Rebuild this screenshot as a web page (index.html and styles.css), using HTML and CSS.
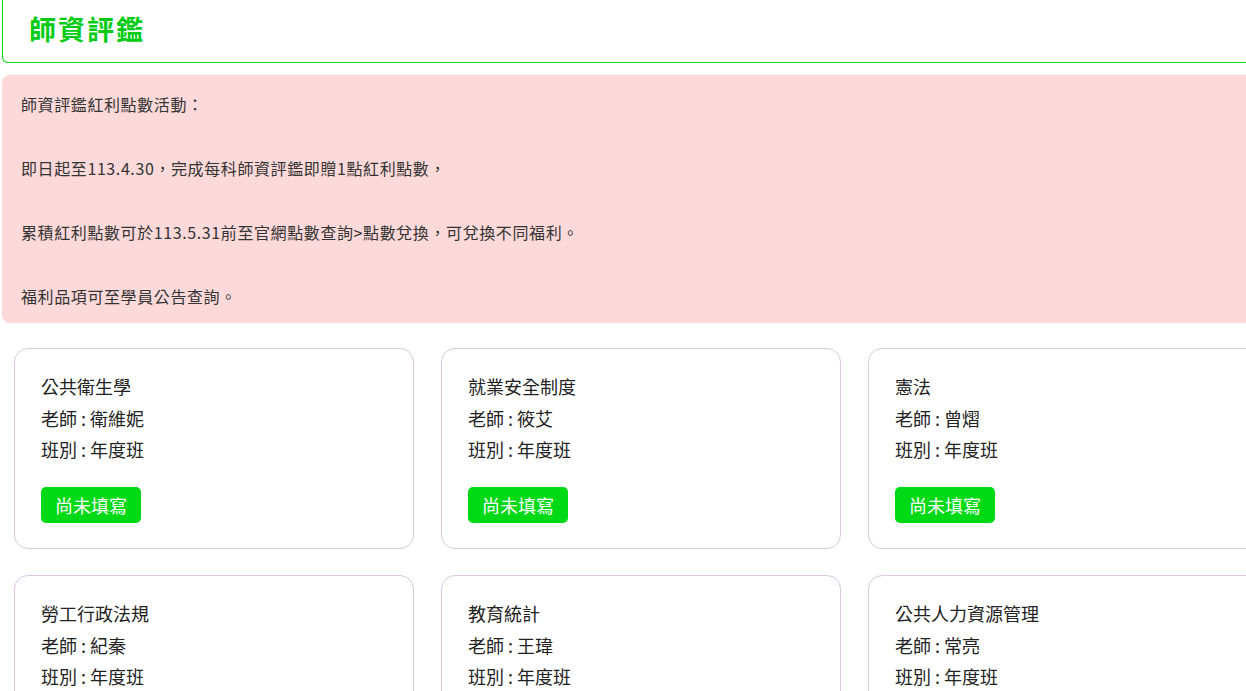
FILE: index.html
```html
<!DOCTYPE html>
<html lang="zh-Hant">

<head>
    <meta charset="UTF-8" />
    <meta name="viewport" content="width=device-width, initial-scale=1.0" />
    <title>師資評鑑</title>
    <link rel="stylesheet" href="styles.css">
</head>

<body>
    <div class="page">
        <header class="page-header">
            <h1>師資評鑑</h1>
        </header>

        <div class="notice">
            師資評鑑紅利點數活動：<br><br>
            即日起至113.4.30，完成每科師資評鑑即贈1點紅利點數，<br><br>
            累積紅利點數可於113.5.31前至官網點數查詢&gt;點數兌換，可兌換不同福利。<br><br>
            福利品項可至學員公告查詢。
        </div>

        <div class="course-grid">
            <div class="course-card">
                <p>公共衛生學</p>
                <p>老師 : 衛維妮</p>
                <p>班別 : 年度班</p>
                <button class="btn-fill">尚未填寫</button>
            </div>
            <div class="course-card">
                <p>就業安全制度</p>
                <p>老師 : 筱艾</p>
                <p>班別 : 年度班</p>
                <button class="btn-fill">尚未填寫</button>
            </div>
            <div class="course-card">
                <p>憲法</p>
                <p>老師 : 曾熠</p>
                <p>班別 : 年度班</p>
                <button class="btn-fill">尚未填寫</button>
            </div>
            <div class="course-card">
                <p>勞工行政法規</p>
                <p>老師 : 紀秦</p>
                <p>班別 : 年度班</p>
                <button class="btn-fill">尚未填寫</button>
            </div>
            <div class="course-card">
                <p>教育統計</p>
                <p>老師 : 王瑋</p>
                <p>班別 : 年度班</p>
                <button class="btn-fill">尚未填寫</button>
            </div>
            <div class="course-card">
                <p>公共人力資源管理</p>
                <p>老師 : 常亮</p>
                <p>班別 : 年度班</p>
                <button class="btn-fill">尚未填寫</button>
            </div>
        </div>
    </div>
</body>

</html>
```

FILE: styles.css
```css
* {
    box-sizing: border-box;
}

html,
body {
    overflow: hidden;
}

body {
    margin: 0;
    background: #fff;
    color: #222;
    font-family: "Noto Sans CJK TC", "Noto Sans", sans-serif;
}

.page {
    width: 1300px;
    padding-left: 2px;
}

.page-header {
    height: 63px;
    border: 1px solid #00d916;
    border-top: none;
    border-radius: 0 0 0 6px;
    padding-left: 26px;
    display: flex;
    align-items: center;
}

.page-header h1 {
    margin: 0 0 6px;
    font-size: 27px;
    font-weight: 700;
    color: #00cc14;
    letter-spacing: 2px;
}

.notice {
    margin-top: 12px;
    background: #fdd9d9;
    border-radius: 8px 0 0 8px;
    padding: 13px 19px 11px;
    font-size: 16px;
    line-height: 32px;
    letter-spacing: 0.6px;
    color: #333;
}

.course-grid {
    display: grid;
    grid-template-columns: repeat(3, 400px);
    column-gap: 27px;
    row-gap: 26px;
    margin: 25px 0 0 12px;
}

.course-card {
    border: 1px solid #dcc6e2;
    border-radius: 14px;
    padding: 22px 26px 25px;
    height: 201px;
}

.course-card p {
    margin: 0;
    font-size: 18px;
    line-height: 31.5px;
}

.btn-fill {
    margin-top: 21px;
    width: 100px;
    height: 36px;
    border: none;
    border-radius: 5px;
    background: #00d916;
    color: #fff;
    font-family: inherit;
    font-size: 18px;
    cursor: pointer;
}
```
